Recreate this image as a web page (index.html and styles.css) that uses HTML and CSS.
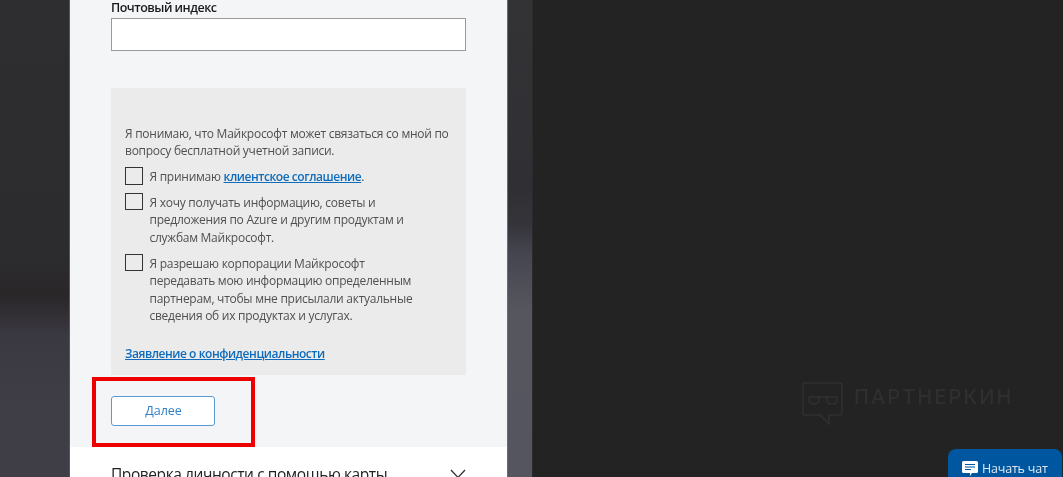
FILE: index.html
```html
<!DOCTYPE html>
<html lang="ru">
<head>
<meta charset="utf-8">
<title>Почтовый индекс</title>
<link rel="stylesheet" href="styles.css">
</head>
<body>
<div class="page">
  <div class="backdrop">
    <div class="strip strip-left"></div>
    <main class="panel">
      <section class="form">
        <label class="field-label">Почтовый индекс</label>
        <div class="input"></div>
        <div class="agreement">
          <p class="intro">Я понимаю, что Майкрософт может связаться со мной по вопросу бесплатной учетной записи.</p>
          <div class="check"><span class="box"></span><span class="check-text">Я принимаю <a class="link" href="#">клиентское соглашение</a>.</span></div>
          <div class="check wide-gap"><span class="box"></span><span class="check-text">Я хочу получать информацию, советы и предложения по Azure и другим продуктам и службам Майкрософт.</span></div>
          <div class="check"><span class="box"></span><span class="check-text">Я разрешаю корпорации Майкрософт передавать мою информацию определенным партнерам, чтобы мне присылали актуальные сведения об их продуктах и услугах.</span></div>
          <a class="link privacy" href="#">Заявление о конфиденциальности</a>
        </div>
        <button class="next">Далее</button>
        <div class="highlight"></div>
      </section>
      <section class="card-check">
        <span>Проверка личности с помощью карты</span>
        <svg class="chevron" width="16" height="10" viewBox="0 0 16 10"><path d="M1 1l7 7.5L15 1" fill="none" stroke="#333" stroke-width="1.3"/></svg>
      </section>
    </main>
    <div class="strip strip-right"></div>
  </div>
  <div class="watermark">
    <svg width="42" height="44" viewBox="0 0 42 44"><g fill="none" stroke="#303030" stroke-width="1.5"><path d="M3 1h35a2 2 0 0 1 2 2v28a2 2 0 0 1-2 2H27v9L18 33H3a2 2 0 0 1-2-2V3a2 2 0 0 1 2-2z"/><path d="M7 15h28M7 15c0 7 2 7 5 7s5 0 5-7M25 15c0 7 2 7 5 7s5 0 5-7"/></g></svg>
    <span>ПАРТНЕРКИН</span>
  </div>
  <div class="chat">
    <svg width="16" height="16" viewBox="0 0 16 16"><path d="M1.5 1h13A1.5 1.5 0 0 1 16 2.500v9a1.500 1.500 0 0 1-1.500 1.500H10l-2 3v-3H1.500A1.500 1.500 0 0 1 0 11.500v-9A1.500 1.500 0 0 1 1.500 1z" fill="#fff"/><path d="M3 4.500h10M3 7h10M3 9.500h6" stroke="#00579f" stroke-width="1.200"/></svg>
    <span>Начать чат</span>
  </div>
</div>
</body>
</html>
```
FILE: styles.css
```css
* { box-sizing: border-box; }
html, body { margin: 0; padding: 0; }
body { background: #232323; font-family: "Open Sans", "Noto Sans", sans-serif; }
.page { position: relative; width: 1063px; height: 477px; overflow: hidden; background: #232323; filter: blur(0.35px); }
.backdrop { display: flex; width: 533px; height: 477px; }
.strip { height: 477px; flex: none; }
.strip-left {
  width: 70px; border-right: 1px solid #55555a;
  background: linear-gradient(180deg, #2e2d30 0, #2c2b2e 55%, #2a2729 62%, #3a3840 70%, #3f3d45 85%, #3f3e46 100%);
}
.strip-right {
  width: 26px; border-left: 1px solid #6a6a72; border-right: 1px solid #2a2a2a;
  background: linear-gradient(180deg, #333336 0, #303034 40%, #34343a 47%, #45454f 53%, #56565f 65%, #55555f 100%);
}
.panel { width: 437px; height: 477px; flex: none; display: flex; flex-direction: column; background: #fff; }
.form { position: relative; height: 447px; flex: none; padding: 0 41px; background: #f4f5f7; }
.field-label { display: block; height: 18px; padding-top: 1px; font-size: 12.500px; line-height: 14px; font-weight: 600; letter-spacing: -0.5px; color: #1a1a1a; white-space: nowrap; }
.input { width: 355px; height: 33px; background: #fff; border: 1px solid #9a9a9a; }
.agreement {
  width: 355px; height: 287px; margin-top: 37px; padding: 37px 14px 0;
  background: #ebebeb; color: #505050; font-size: 12px; line-height: 17.500px; letter-spacing: -0.26px;
}
.intro { margin: 0 0 9px; line-height: 17px; }
.check { display: flex; gap: 7px; margin-bottom: 8px; }
.wide-gap { margin-bottom: 8.500px; }
.check-text { width: 270px; }
.box { flex: none; width: 17.500px; height: 17.500px; margin-top: -1px; border: 1.500px solid #333; background: #ebebeb; }
.link { color: #0f6cbd; text-decoration: underline; font-weight: 600; letter-spacing: -0.45px; }
.privacy { display: block; margin-top: 20px; }
.next {
  display: block; width: 104px; height: 30px; margin-top: 21px; padding: 0 0 0 1px;
  background: #fff; border: 1px solid #5b9bd5; border-radius: 3px;
  color: #2f7ec7; font: 12.500px/28px "Open Sans", sans-serif;
}
.highlight { position: absolute; left: 22px; top: 377px; width: 163px; height: 70px; border: 4px solid #ec0000; }
.card-check {
  flex: 1; display: flex; justify-content: space-between; padding: 17px 41px 0 41px; white-space: nowrap;
  background: #fff; color: #222; font-size: 15.500px; line-height: 20px; letter-spacing: -0.42px;
}
.chevron { margin-top: 5px; }
.watermark { position: absolute; left: 802px; top: 382px; display: flex; gap: 10px; color: #2f2f2f; font-size: 20px; letter-spacing: 2.100px; font-family: "Inter", sans-serif; font-weight: 500; }
.watermark span { line-height: 30px; }
.chat {
  position: absolute; left: 948px; top: 449px; width: 114px; height: 40px;
  padding: 11px 0 0 14px; display: flex; gap: 4px; align-items: flex-start;
  background: #00579f; border-radius: 8px 8px 0 0; color: #dfe9f5; font-size: 12.500px; line-height: 17px; letter-spacing: -0.2px;
}
```
